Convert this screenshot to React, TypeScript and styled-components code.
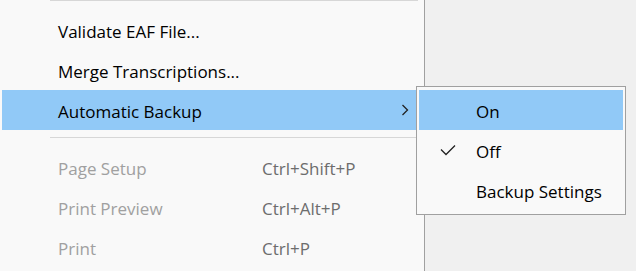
import styled, { createGlobalStyle } from 'styled-components'

const GlobalStyle = createGlobalStyle`
  html, body {
    margin: 0;
    padding: 0;
    background: #f0f0f0;
  }
  body {
    font-family: 'Open Sans', 'Noto Sans', sans-serif;
    font-size: 17px;
    color: #000;
  }
`

type Item = {
  label: string
  shortcut?: string
  disabled?: boolean
  active?: boolean
  submenu?: boolean
}

const editItems: Item[] = [
  { label: 'Validate EAF File...' },
  { label: 'Merge Transcriptions...' },
  { label: 'Automatic Backup', active: true, submenu: true }
]

const printItems: Item[] = [
  { label: 'Page Setup', shortcut: 'Ctrl+Shift+P', disabled: true },
  { label: 'Print Preview', shortcut: 'Ctrl+Alt+P', disabled: true },
  { label: 'Print', shortcut: 'Ctrl+P', disabled: true }
]

const backupItems = [
  { label: 'On', active: true, checked: false },
  { label: 'Off', active: false, checked: true },
  { label: 'Backup Settings', active: false, checked: false }
]

const Chevron = () => (
  <svg width="8" height="12" viewBox="0 0 8 12">
    <path d="M1.5 1 L6.5 6 L1.5 11" fill="none" stroke="#222" strokeWidth="1.3" />
  </svg>
)

const Check = () => (
  <svg width="16" height="12" viewBox="0 0 16 12">
    <path d="M1 5.5 L6 10.5 L15 1.5" fill="none" stroke="#222" strokeWidth="1.3" />
  </svg>
)

const BackupMenu = () => (
  <StyledSubmenu>
    {backupItems.map((item) => (
      <StyledSubRow key={item.label} $active={item.active}>
        <StyledCheckCell>{item.checked && <Check />}</StyledCheckCell>
        <StyledText>{item.label}</StyledText>
      </StyledSubRow>
    ))}
  </StyledSubmenu>
)

const MenuRow = ({ item }: { item: Item }) => (
  <StyledRow $active={item.active} $disabled={item.disabled}>
    <StyledText>{item.label}</StyledText>
    <StyledShortcut>{item.shortcut}</StyledShortcut>
    <StyledArrow>{item.submenu && <Chevron />}</StyledArrow>
    {item.submenu && <BackupMenu />}
  </StyledRow>
)

const App = () => {
  return (
    <>
      <GlobalStyle />
      <StyledPage>
        <StyledMenu>
          <StyledList>
            <StyledSeparator />
            {editItems.map((item) => (
              <MenuRow key={item.label} item={item} />
            ))}
            <StyledSeparator />
            {printItems.map((item) => (
              <MenuRow key={item.label} item={item} />
            ))}
          </StyledList>
        </StyledMenu>
      </StyledPage>
    </>
  )
}

export default App

const StyledPage = styled.div`
  display: flex;
  height: 271px;
  overflow: hidden;
`

const StyledMenu = styled.div`
  width: 425px;
  box-sizing: border-box;
  background: #f9f9f9;
  border-right: 1px solid #a0a0a0;
`

const StyledList = styled.div`
  display: flex;
  flex-direction: column;
  margin-top: -7px;
  padding: 0 2px;
`

const StyledSeparator = styled.div`
  height: 17px;
  box-sizing: border-box;
  padding-top: 7px;
  margin: 0 4px 0 48px;

  &::before {
    content: '';
    display: block;
    height: 1px;
    background: #d7d7d7;
  }
`

const StyledRow = styled.div<{ $active?: boolean; $disabled?: boolean }>`
  position: relative;
  display: grid;
  grid-template-columns: 204px 1fr 8px;
  align-items: center;
  height: 40px;
  padding: 0 13px 0 56px;
  background: ${({ $active }) => ($active ? '#91c9f7' : 'transparent')};
  color: ${({ $disabled }) => ($disabled ? '#a0a0a0' : '#000')};
  white-space: nowrap;
`

const StyledText = styled.span`
  line-height: 1;
  padding-top: 3px;
`

const StyledShortcut = styled(StyledText)`
  color: #6d6d6d;
`

const StyledArrow = styled.span`
  display: flex;
  align-items: center;
`

const StyledSubmenu = styled.div`
  position: absolute;
  top: -4px;
  left: 414px;
  width: 210px;
  box-sizing: border-box;
  padding: 3px 2px 4px;
  background: #f9f9f9;
  border: 1px solid #a0a0a0;
  display: flex;
  flex-direction: column;
  z-index: 1;
`

const StyledSubRow = styled.div<{ $active?: boolean }>`
  display: grid;
  grid-template-columns: 57px 1fr;
  align-items: center;
  height: 40px;
  background: ${({ $active }) => ($active ? '#91c9f7' : 'transparent')};
  color: #000;
`

const StyledCheckCell = styled.span`
  display: flex;
  align-items: center;
  padding-left: 21px;
`
